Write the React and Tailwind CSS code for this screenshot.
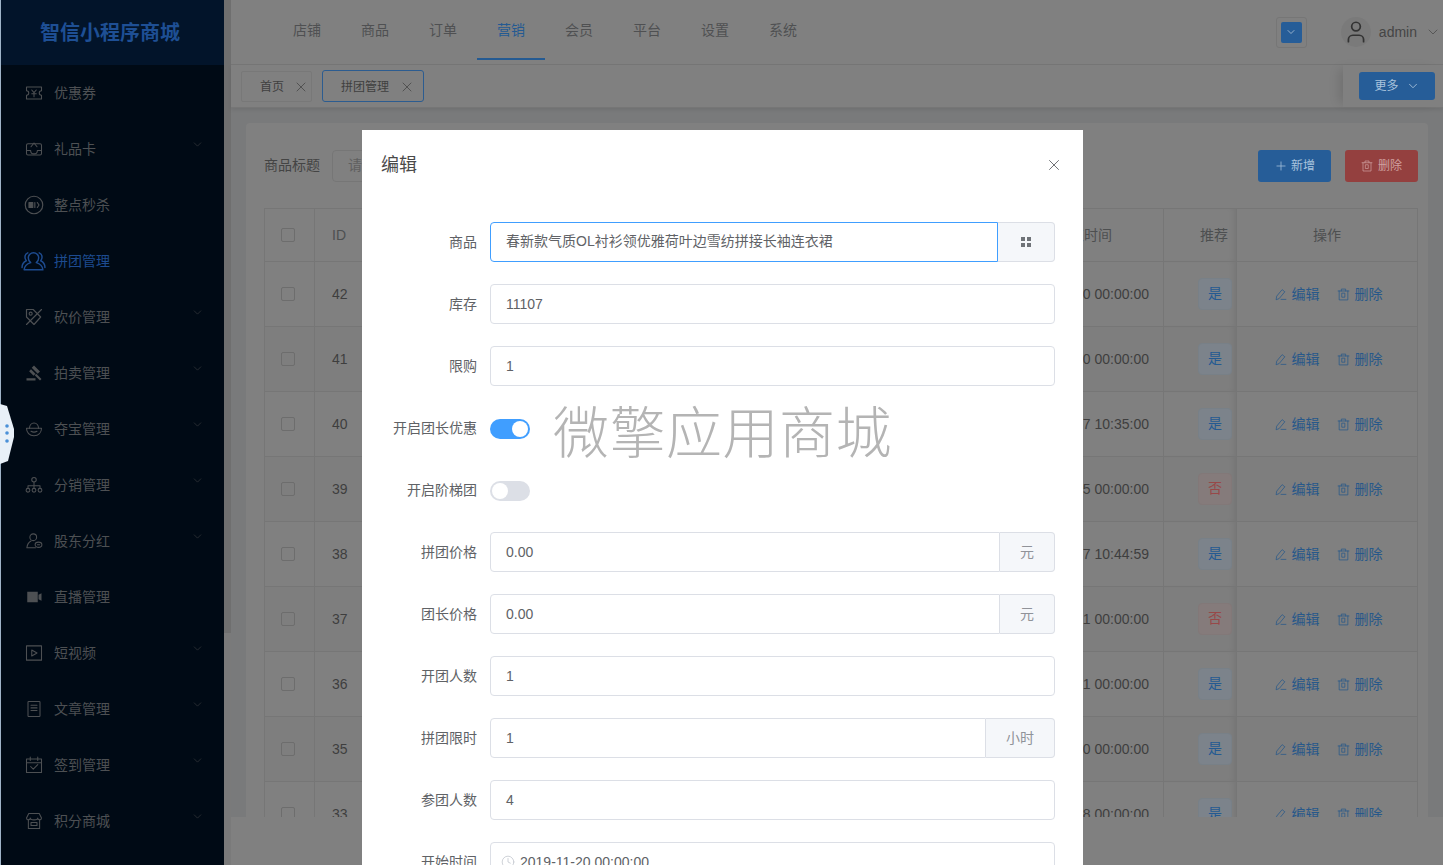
import React from "react";
import { ChevronDown, X, Plus, User, Clock } from "lucide-react";

const font = "font-['Liberation_Sans','Noto_Sans_CJK_SC',sans-serif]";

function SvgIcon({ children, className = "w-[18px] h-[18px]" }) {
  return (
    <svg viewBox="0 0 24 24" fill="none" stroke="currentColor" strokeWidth="1.4" strokeLinecap="round" strokeLinejoin="round" className={className}>
      {children}
    </svg>
  );
}

function PencilLine({ className }) {
  return (
    <SvgIcon className={className}>
      <path d="M4 21l1-6L15 3l5 4-10 12z" />
      <path d="M13 21h9" />
    </SvgIcon>
  );
}

function TrashBox({ className }) {
  return (
    <SvgIcon className={className}>
      <path d="M2 5.500h20M8 5.500V2h8v3.500" />
      <path d="M4 5.500V22h16V5.500" />
      <path d="M9.500 9.500h5V17h-5z" />
    </SvgIcon>
  );
}

const icons = {
  coupon: (
    <SvgIcon>
      <path d="M2 4h20v5a3 3 0 0 0 0 6v5H2v-5a3 3 0 0 0 0-6z" />
      <path d="M9 8l3 3.500L15 8M12 11.500V17M9 13h6" />
    </SvgIcon>
  ),
  gift: (
    <SvgIcon>
      <rect x="2" y="5" width="20" height="15" rx="2" />
      <path d="M2 14h5.500a4.500 4.500 0 0 0 9 0H22M8 9l4-5 4 5" />
    </SvgIcon>
  ),
  seckill: (
    <SvgIcon className="w-[20px] h-[20px]">
      <circle cx="12" cy="12" r="10.500" />
      <rect x="6" y="9" width="4.500" height="6" fill="currentColor" />
      <path d="M13 9v6M16 9l2 3-2 3" />
    </SvgIcon>
  ),
  group: (
    <SvgIcon className="w-[25px] h-[25px]">
      <path d="M12 3.500a5 5 0 0 1 5 5c0 2-1 3.600-2.300 4.600 3.500 1 6 3.200 6.300 6.900H3c.3-3.700 2.800-5.900 6.300-6.900C8 12.100 7 10.500 7 8.500a5 5 0 0 1 5-5z" />
      <path d="M6.500 3.700A4.500 4.500 0 0 0 3.800 8c0 1.400.5 2.500 1.300 3.300C2.700 12.500 1 14.800 1 17.700M17.500 3.700A4.500 4.500 0 0 1 20.200 8c0 1.400-.5 2.500-1.300 3.300 2.400 1.200 4.100 3.500 4.100 6.400" />
    </SvgIcon>
  ),
  bargain: (
    <SvgIcon className="w-[20px] h-[20px]">
      <path d="M3 3h8l9 9-8 9-9-9z" />
      <circle cx="8" cy="8" r="1.800" />
      <path d="M21 3L3 21" />
    </SvgIcon>
  ),
  auction: (
    <svg viewBox="0 0 24 24" fill="currentColor" className="w-[18px] h-[18px]">
      <path d="M12 2l8 8-3 3-8-8zM8 7l6 6-2.500 2.500-6-6zM15 13l7 7-2 2-7-7zM2 19h12v3H2z" />
    </svg>
  ),
  treasure: (
    <SvgIcon>
      <path d="M2 11h20c0 6-4 10-10 10S2 17 2 11z" />
      <path d="M6 11c0-4 2.500-7 6-7s6 3 6 7M8 15c2.500 1.500 5.500 1.500 8 0" />
    </SvgIcon>
  ),
  distribution: (
    <SvgIcon>
      <circle cx="12" cy="5" r="3" />
      <circle cx="4" cy="19" r="2.500" />
      <circle cx="12" cy="19" r="2.500" />
      <circle cx="20" cy="19" r="2.500" />
      <path d="M12 8v8.500M4 16.500V13h16v3.500" />
    </SvgIcon>
  ),
  holder: (
    <SvgIcon>
      <circle cx="11" cy="7" r="4.500" />
      <path d="M8 12c-3 1.500-5 4.500-5.500 9H14" />
      <ellipse cx="18" cy="17" rx="4.500" ry="3.500" />
      <path d="M16.500 17h3" />
    </SvgIcon>
  ),
  live: (
    <svg viewBox="0 0 24 24" fill="currentColor" className="w-[18px] h-[18px]">
      <path d="M3 5h14v14H3zM18 9l4-2v10l-4-2z" />
    </svg>
  ),
  video: (
    <SvgIcon>
      <rect x="2" y="2.500" width="20" height="19" />
      <path d="M9 8l7 4-7 4z" />
    </SvgIcon>
  ),
  article: (
    <SvgIcon>
      <rect x="4" y="2" width="16" height="20" rx="1" />
      <path d="M8 7h8M8 10.500h8M8 14h8" />
    </SvgIcon>
  ),
  sign: (
    <SvgIcon>
      <rect x="2" y="4" width="20" height="18" />
      <path d="M2 9h20M7 1.500V6M17 1.500V6M7.500 14l3.500 3.500 6-6" />
    </SvgIcon>
  ),
  shop: (
    <SvgIcon>
      <path d="M5 2h14l3 6c0 1.500-1.200 2.500-2.500 2.500S17 9.500 17 8c0 1.500-2 2.500-5 2.500S7 9.500 7 8c0 1.500-1.200 2.500-2.500 2.500S2 9.500 2 8z" />
      <path d="M4.500 10.500V22h15V10.500M8 14h8v4H8z" />
    </SvgIcon>
  ),
};

const menu = [
  ["优惠券", "coupon", false],
  ["礼品卡", "gift", true],
  ["整点秒杀", "seckill", false],
  ["拼团管理", "group", false, true],
  ["砍价管理", "bargain", true],
  ["拍卖管理", "auction", true],
  ["夺宝管理", "treasure", true],
  ["分销管理", "distribution", true],
  ["股东分红", "holder", true],
  ["直播管理", "live", false],
  ["短视频", "video", true],
  ["文章管理", "article", true],
  ["签到管理", "sign", true],
  ["积分商城", "shop", true],
];

const navItems = ["店铺", "商品", "订单", "营销", "会员", "平台", "设置", "系统"];

const rows = [
  ["42", "2019-11-30 00:00:00", true],
  ["41", "2019-11-30 00:00:00", true],
  ["40", "2019-11-27 10:35:00", true],
  ["39", "2019-11-25 00:00:00", false],
  ["38", "2019-11-27 10:44:59", true],
  ["37", "2019-12-31 00:00:00", false],
  ["36", "2019-12-31 00:00:00", true],
  ["35", "2019-11-30 00:00:00", true],
  ["33", "2019-11-28 00:00:00", true],
];

function Sidebar() {
  return (
    <aside className="w-[224px] shrink-0 bg-[#000a15] border-l border-[#9fb4c8] flex flex-col">
      <div className="h-[65px] shrink-0 bg-[#02142a] flex items-center justify-center text-[20px] font-bold text-[#1e4f94] pr-[5px]">
        智信小程序商城
      </div>
      {menu.map(([name, icon, arrow, active]) => (
        <div key={name} className={`h-[56px] shrink-0 flex items-center relative text-[14px] ${active ? "text-[#1d4b8f]" : "text-[#4d5053]"}`}>
          <span className="w-[53px] flex justify-center pl-[12px] shrink-0">{icons[icon]}</span>
          {name}
          {arrow && <ChevronDown strokeWidth={1.2} className="absolute right-[20px] top-[17px] w-[13px] h-[13px] text-[#3a3d40]" />}
        </div>
      ))}
    </aside>
  );
}

function TopBar() {
  return (
    <header className="h-[65px] shrink-0 bg-[#808080] border-b border-[#767676] flex items-start">
      <nav className="flex h-[60px] pl-[42px]">
        {navItems.map((n) => (
          <div key={n} className={`w-[68px] pt-[2px] flex items-center justify-center text-[14px] border-b-2 ${n === "营销" ? "text-[#245a92] border-[#245a92]" : "text-[#4f5052] border-transparent"}`}>
            {n}
          </div>
        ))}
      </nav>
      <div className="ml-auto h-full flex items-center">
        <div className="w-[31px] h-[31px] rounded-[3px] border border-[#767676] flex items-center justify-center">
          <span className="w-[21px] h-[21px] rounded-[2px] bg-[#265d98] flex items-center justify-center">
            <ChevronDown strokeWidth={1.5} className="w-[12px] h-[12px] text-[#b9c9da]" />
          </span>
        </div>
        <span className="ml-[34px] w-[30px] h-[30px] rounded-full bg-[#7a7a7a] flex items-center justify-center">
          <User strokeWidth={1.6} className="w-[26px] h-[26px] text-[#333]" />
        </span>
        <span className="ml-[8px] text-[14px] text-[#454545]">admin</span>
        <ChevronDown strokeWidth={1.3} className="ml-[8px] mr-[2px] w-[16px] h-[16px] text-[#505050]" />
      </div>
    </header>
  );
}

function TabsBar() {
  return (
    <div className="h-[43px] shrink-0 bg-[#808080] border-b border-[#767676] flex items-center pl-[10px] relative shadow-[0_2px_4px_rgba(0,0,0,0.08)]">
      <div className="h-[31px] w-[71px] border border-[#787878] rounded-[2px] flex items-center pl-[18px] pt-[1px] text-[12px] text-[#3f3f3f]">
        首页
        <X strokeWidth={1.3} className="ml-[9px] w-[16px] h-[16px] text-[#4a4a4a]" />
      </div>
      <div className="ml-[10px] h-[32px] w-[102px] border border-[#2c5c90] rounded-[3px] flex items-center pl-[18px] pt-[1px] text-[12px] text-[#3f3f3f]">
        拼团管理
        <X strokeWidth={1.3} className="ml-[10px] w-[16px] h-[16px] text-[#4a4a4a]" />
      </div>
      <div className="ml-auto h-full w-[100px] pl-[16px] flex items-center shadow-[-8px_0_10px_-4px_rgba(0,0,0,0.12)]">
        <div className="w-[76px] h-[28px] rounded-[3px] bg-[#265d98] flex items-center justify-center text-[12px] text-[#a9c3dd]">
          更多
          <ChevronDown strokeWidth={1.5} className="ml-[7px] w-[14px] h-[14px]" />
        </div>
      </div>
    </div>
  );
}

function Table() {
  const cell = "border-r border-b border-[#767676]";
  return (
    <div className="border-l border-t border-[#767676] flex flex-col">
      <div className="flex h-[53px] text-[14px] text-[#4d4f50] shrink-0">
        <div className={`${cell} w-[50px] flex items-center justify-center pr-[3px]`}>
          <span className="w-[14px] h-[14px] rounded-[2px] border border-[#6d6d6d]" />
        </div>
        <div className={`${cell} w-[100px] flex items-center pl-[17px] pt-[1px]`}>ID</div>
        <div className={`${cell} flex-1`} />
        <div className={`${cell} w-[170px] flex items-center pl-[62px] pt-[1px]`}>结束时间</div>
        <div className={`${cell} w-[73px] flex items-center justify-end pr-[8px] pt-[1px] shadow-[inset_-6px_0_6px_-4px_rgba(0,0,0,0.08)]`}>推荐</div>
        <div className={`${cell} w-[181px] flex items-center justify-center pt-[1px]`}>操作</div>
      </div>
      {rows.map(([id, time, rec], i) => (
        <div key={id} className={`flex h-[65px] shrink-0 text-[14px] text-[#3e3e3e] ${i % 2 ? "bg-[#7e7e7e]" : ""}`}>
          <div className={`${cell} w-[50px] flex items-center justify-center pr-[3px]`}>
            <span className="w-[14px] h-[14px] rounded-[2px] border border-[#6d6d6d]" />
          </div>
          <div className={`${cell} w-[100px] flex items-center pl-[17px]`}>{id}</div>
          <div className={`${cell} flex-1`} />
          <div className={`${cell} w-[170px] flex items-center justify-end pr-[14px] whitespace-nowrap`}>{time}</div>
          <div className={`${cell} w-[73px] flex items-center justify-end pr-[4px] shadow-[inset_-6px_0_6px_-4px_rgba(0,0,0,0.08)]`}>
            <span className={`w-[34px] h-[32px] pb-[1px] rounded-[4px] border flex items-center justify-center text-[14px] ${rec ? "bg-[#7c838b] border-[#788087] text-[#245a92]" : "bg-[#857b7b] border-[#827878] text-[#984848]"}`}>
              {rec ? "是" : "否"}
            </span>
          </div>
          <div className={`${cell} w-[181px] flex items-center justify-center gap-[17px] pl-[2px] text-[#27588a] text-[14px]`}>
            <span className="flex items-center gap-[5px]">
              <PencilLine className="w-[13px] h-[13px]" />
              编辑
            </span>
            <span className="flex items-center gap-[5px]">
              <TrashBox className="w-[13px] h-[13px]" />
              删除
            </span>
          </div>
        </div>
      ))}
    </div>
  );
}

function Page() {
  return (
    <main className="flex-1 min-w-0 flex flex-col h-full">
      <TopBar />
      <TabsBar />
      <div className="flex-1 min-h-0 bg-[#797a7b] pl-[15px] pr-[15px] pt-[15px] overflow-hidden flex flex-col">
        <div className="h-[694px] shrink-0 bg-[#808080] rounded-t-[4px] pl-[18px] pr-[10px] overflow-hidden">
          <div className="h-[85px] flex items-center">
            <span className="text-[14px] text-[#444]">商品标题</span>
            <div className="ml-[12px] w-[200px] h-[32px] rounded-[4px] border border-[#767676] pl-[15px] flex items-center text-[14px] text-[#5f5f5f]">请输入</div>
            <div className="ml-auto flex gap-[14px]">
              <div className="w-[73px] h-[32px] rounded-[3px] bg-[#265d98] text-[#a9c3dd] text-[12px] flex items-center justify-center gap-[3px]">
                <Plus strokeWidth={1.3} className="w-[14px] h-[14px]" />
                新增
              </div>
              <div className="w-[73px] h-[32px] rounded-[3px] bg-[#94403f] text-[#d0a0a0] text-[12px] flex items-center justify-center gap-[5px]">
                <TrashBox className="w-[12px] h-[12px]" />
                删除
              </div>
            </div>
          </div>
          <Table />
        </div>
        <div className="flex-1 -mx-[15px] bg-[#808080]" />
      </div>
    </main>
  );
}

function Field({ label, children }) {
  return (
    <div className="flex items-center h-[40px] mb-[22px] shrink-0">
      <label className="w-[96px] text-right text-[14px] text-[#606266] whitespace-nowrap shrink-0">{label}</label>
      <div className="ml-[13px] w-[565px] h-full flex">{children}</div>
    </div>
  );
}

function Input({ value, addon }) {
  return (
    <>
      <div className={`flex-1 h-full border border-[#dcdfe6] flex items-center pl-[15px] text-[14px] text-[#606266] ${addon ? "rounded-l-[4px]" : "rounded-[4px]"}`}>{value}</div>
      {addon && (
        <div className="h-full bg-[#f5f7fa] border border-l-0 border-[#dcdfe6] rounded-r-[4px] px-[20px] flex items-center text-[14px] text-[#909399]">{addon}</div>
      )}
    </>
  );
}

function Toggle({ on }) {
  return (
    <span className={`w-[40px] h-[20px] mt-[2px] rounded-full relative ${on ? "bg-[#409eff]" : "bg-[#dcdfe6]"}`}>
      <span className={`absolute top-[2px] w-[16px] h-[16px] rounded-full bg-white ${on ? "right-[2px]" : "left-[2px]"}`} />
    </span>
  );
}

function EditDialog() {
  return (
    <div className="absolute left-[362px] top-[130px] w-[721px] h-[735px] bg-white overflow-hidden">
      <div className="h-[70px] pl-[19px] pr-[20px] flex items-center justify-between">
        <span className="text-[18px] text-[#4a4a4a]">编辑</span>
        <X strokeWidth={1.2} className="w-[18px] h-[18px] text-[#606266]" />
      </div>
      <div className="pt-[22px] pl-[19px] flex flex-col">
        <Field label="商品">
          <div className="flex-1 h-full border border-[#409eff] rounded-l-[4px] flex items-center pl-[15px] pb-[1px] text-[14px] text-[#606266]">春新款气质OL衬衫领优雅荷叶边雪纺拼接长袖连衣裙</div>
          <div className="w-[57px] h-full bg-[#f5f7fa] border border-l-0 border-[#dcdfe6] rounded-r-[4px] flex items-center justify-center">
            <span className="grid grid-cols-2 gap-[2px]">
              <i className="w-[4px] h-[4px] bg-[#6f7378]" />
              <i className="w-[4px] h-[4px] bg-[#6f7378]" />
              <i className="w-[4px] h-[4px] bg-[#6f7378]" />
              <i className="w-[4px] h-[4px] bg-[#6f7378]" />
            </span>
          </div>
        </Field>
        <Field label="库存"><Input value="11107" /></Field>
        <Field label="限购"><Input value="1" /></Field>
        <Field label="开启团长优惠"><span className="h-full flex items-center"><Toggle on /></span></Field>
        <Field label="开启阶梯团"><span className="h-full flex items-center"><Toggle /></span></Field>
        <Field label="拼团价格"><Input value="0.00" addon="元" /></Field>
        <Field label="团长价格"><Input value="0.00" addon="元" /></Field>
        <Field label="开团人数"><Input value="1" /></Field>
        <Field label="拼团限时"><Input value="1" addon="小时" /></Field>
        <Field label="参团人数"><Input value="4" /></Field>
        <Field label="开始时间">
          <div className="flex-1 h-full border border-[#dcdfe6] rounded-[4px] flex items-center pl-[10px] text-[14px] text-[#606266]">
            <Clock strokeWidth={1.3} className="w-[14px] h-[14px] mr-[5px] text-[#c0c4cc]" />
            2019-11-20 00:00:00
          </div>
        </Field>
      </div>
    </div>
  );
}

export default function App() {
  return (
    <div className={`relative h-screen w-full overflow-hidden flex bg-[#808080] ${font}`}>
      <Sidebar />
      <div className="w-[7px] shrink-0 bg-[#7a7a7a] flex flex-col">
        <div className="h-[633px] bg-[#6f6f6f]" />
      </div>
      <Page />
      <EditDialog />
      {/* side handle over the menu */}
      <svg viewBox="0 0 15 62" className="absolute left-0 top-[403px] w-[15px] h-[62px]">
        <path d="M0 1 L7 3 L14 26 L14 34 L8 58 L0 61 Z" fill="#e8f0f8" />
        <circle cx="7" cy="23" r="1.800" fill="#4a90d8" />
        <circle cx="7" cy="30" r="1.800" fill="#4a90d8" />
        <circle cx="7" cy="38" r="1.800" fill="#4a90d8" />
      </svg>
      {/* watermark */}
      <div className="absolute left-[553px] top-[398px] text-[56px] leading-[72px] tracking-[0.5px] text-[#b4b4b4] whitespace-nowrap pointer-events-none font-light">微擎应用商城</div>
    </div>
  );
}
